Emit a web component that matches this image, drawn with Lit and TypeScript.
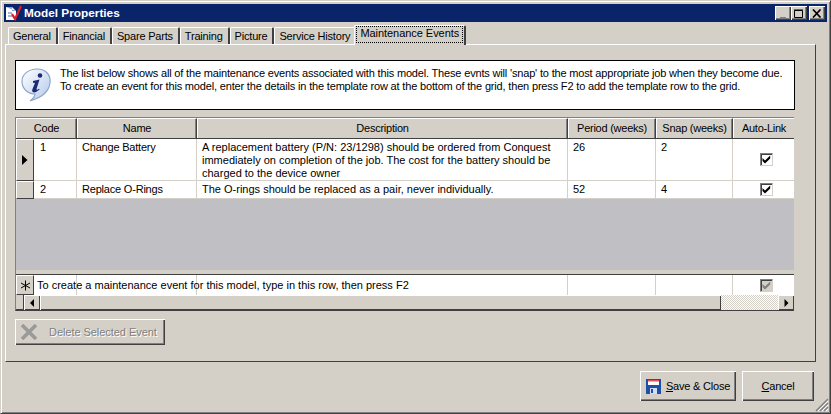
import { LitElement, html, css, svg } from "lit";
import { customElement } from "lit/decorators.js";

const checkMark = (color: string) => svg`<svg width="11" height="11" viewBox="0 0 11 11"><path d="M1.5 4 L4 6.5 L9.2 1.5 V4.4 L4 9.4 L1.5 6.9 Z" fill="${color}"/></svg>`;

const rows = [
  { code: "1", name: "Change Battery", lines: ["A replacement battery (P/N: 23/1298) should be ordered from Conquest", "immediately on completion of the job. The cost for the battery should be", "charged to the device owner"], period: "26", snap: "2", current: true },
  { code: "2", name: "Replace O-Rings", lines: ["The O-rings should be replaced as a pair, never individually."], period: "52", snap: "4", current: false },
];
const tabs = ["General", "Financial", "Spare Parts", "Training", "Picture", "Service History"];

@customElement("app-root")
export class AppRoot extends LitElement {
  static styles = css`
    :host { display: block; width: 831px; height: 414px; font: 11px/13px "Liberation Sans", Arial, sans-serif; color: #000; overflow: hidden; }
    * { box-sizing: border-box; }
    .window { position: relative; width: 831px; height: 414px; background: #d4d0c8; border: 1px solid; border-color: #d4d0c8 #404040 #404040 #d4d0c8; padding: 3px; box-shadow: inset 1px 1px 0 #fff, inset -1px -1px 0 #808080; display: flex; flex-direction: column; }
    .title { height: 18px; flex: none; background: #0a246a; color: #fff; display: flex; align-items: center; padding: 0 2px 0 1px; font: bold 11.8px "Liberation Sans", Arial, sans-serif; gap: 1px; }
    .title span { flex: 1; }
    .ctl { width: 16px; height: 14px; background: #d4d0c8; box-shadow: inset 1px 1px 0 #fff, inset -1px -1px 0 #404040, inset -2px -2px 0 #808080; display: flex; align-items: center; justify-content: center; margin-left: -1px; }
    .ctl.last { margin-left: 1px; }
    .tabs { display: flex; height: 22px; padding: 0 0 0 4px; flex: none; align-items: flex-end; }
    .tab { height: 17px; padding: 2px 5px 0 4px; background: #d4d0c8; border-left: 1px solid #fff; border-top: 1px solid #fff; border-right: 2px solid #404040; border-radius: 2px 2px 0 0; white-space: nowrap; letter-spacing: -0.2px; }
    .tab.active { height: 20px; margin: 0 0 -1px -3px; padding: 0 1px 0 1px; position: relative; z-index: 1; letter-spacing: -0.05px; }
    .focus { border: 1px dotted #000; padding: 0 3px; height: 17px; display: block; line-height: 13px; }
    .panel { flex: none; width: 811px; height: 318px; margin-left: 1px; background: #d4d0c8; border: 1px solid; border-color: #fff #404040 #404040 #fff; padding: 15px 20px 0 9px; display: flex; flex-direction: column; }
    .info { height: 50px; flex: none; background: #fff; border: 1px solid #000; display: flex; padding: 5px 0 0 4px; gap: 5px; }
    .info p { margin: 0; line-height: 13px; padding-top: 1px; white-space: nowrap; letter-spacing: -0.17px; }
    .grid { margin-top: 7px; height: 194px; flex: none; background: #d4d0c8; display: flex; flex-direction: column; }
    .gridin { width: 779px; height: 194px; background: #c0bfc4; border: 1px solid; border-color: #808080 transparent #404040 #808080; border-right: 0; display: flex; flex-direction: column; }
    .row { display: grid; grid-template-columns: 18px 43px 120px 371px 88px 77px 61px; flex: none; }
    .head { height: 21px; background: #d4d0c8; border-bottom: 1px solid #404040; }
    .hc { display: flex; align-items: center; justify-content: center; border-left: 1px solid #fff; border-top: 1px solid #fff; border-right: 1px solid #404040; box-shadow: inset -1px 0 0 #808080; height: 20px; letter-spacing: -0.25px; }
    .hc.first { grid-column: 1 / 3; }
    .hc.plain { border-right: 0; box-shadow: none; }
    .rh { background: #d4d0c8; border: 1px solid; border-color: #fff #404040 #404040 #fff; display: flex; align-items: center; justify-content: center; }
    .cell { background: #fff; border-right: 1px solid #d4d0c8; border-bottom: 1px solid #d4d0c8; padding: 2px 5px 0; line-height: 13px; white-space: nowrap; }
    .cell.code { padding-left: 6px; }
    .cell.short { letter-spacing: -0.2px; }
    .cell.chk { border-right: 0; display: flex; align-items: center; justify-content: center; padding: 0 0 0 5px; }
    .r1 { height: 42px; }
    .r2 { height: 18px; }
    .chkbox { width: 13px; height: 13px; background: #fff; border: 1px solid; border-color: #808080 #d4d0c8 #d4d0c8 #808080; box-shadow: inset 1px 1px 0 #404040; display: flex; align-items: center; justify-content: center; }
    .chkbox.off { background: #d4d0c8; }
    .spacer { flex: 1; background: #c0bfc4; }
    .sep { height: 5px; background: #d4d0c8; border-bottom: 1px solid #404040; flex: none; }
    .tpl { height: 20px; flex: none; background: #fff; position: relative; }
    .tpl .cell { height: 20px; border-bottom: 0; }
    .tpl .msg { position: absolute; left: 21px; top: 4px; background: transparent; white-space: nowrap; }
    .sb { height: 15px; flex: none; display: flex; background: #d4d0c8; }
    .sbbtn { width: 16px; height: 15px; background: #d4d0c8; box-shadow: inset 1px 1px 0 #fff, inset -1px -1px 0 #404040; display: flex; align-items: center; justify-content: center; flex: none; }
    .sb0 { width: 8px; background: #d4d0c8; border-right: 1px solid #404040; box-shadow: inset 0 -1px 0 #404040; flex: none; }
    .thumb { width: 681px; flex: none; background: #d4d0c8; box-shadow: inset 1px 1px 0 #fff, inset -1px -1px 0 #404040; }
    .track { flex: 1; background: repeating-conic-gradient(#fff 0 25%, #d4d0c8 0 50%) 0 0 / 2px 2px; }
    .del { margin-top: 8px; width: 150px; height: 26px; flex: none; background: #d4d0c8; box-shadow: inset 1px 1px 0 #fff, inset -1px -1px 0 #404040, inset -2px -2px 0 #808080; display: flex; align-items: center; padding: 0 0 0 5px; gap: 11px; color: #808080; text-shadow: 1px 1px 0 #fff; letter-spacing: -0.05px; }
    .foot { display: flex; justify-content: flex-end; gap: 6px; margin-top: 9px; padding-right: 13px; flex: none; }
    .btn { height: 30px; background: #d4d0c8; box-shadow: inset 1px 1px 0 #fff, inset -1px -1px 0 #404040, inset -2px -2px 0 #808080; display: flex; align-items: center; justify-content: center; gap: 5px; letter-spacing: -0.2px; }
    .save { width: 96px; }
    .cancel { width: 72px; }
    .grip { position: absolute; right: 1px; bottom: 1px; }
  `;

  render() {
    return html`<div class="window">
      <div class="title">
        <svg width="18" height="16" viewBox="0 0 18 16"><path d="M1 2 H7 L11 6 V15 H1 Z" fill="#fff"/><path d="M1 2 H7 V6 H11" fill="#7f9ed8"/><path d="M3 8 H7 M3 11 H8" stroke="#4a6fb8"/><path d="M7 9 L10 14 L16 1" fill="none" stroke="#d8202a" stroke-width="2.2"/></svg>
        <span>Model Properties</span>
        <div class="ctl"><svg width="10" height="9" viewBox="0 0 10 9"><path d="M2 8 H8 V9 H2 Z" fill="#808080"/></svg></div>
        <div class="ctl"><svg width="10" height="9" viewBox="0 0 10 9"><path d="M0.5 1.5 H8.5 V8.5 H0.5 Z" fill="none" stroke="#000"/><path d="M0 1 H9" stroke="#000"/></svg></div>
        <div class="ctl last"><svg width="10" height="9" viewBox="0 0 10 9"><path d="M1 0.5 L8.5 8.5 M8.5 0.5 L1 8.5" stroke="#000" stroke-width="1.7"/></svg></div>
      </div>
      <div class="tabs">
        ${tabs.map(t => html`<div class="tab">${t}</div>`)}
        <div class="tab active"><span class="focus">Maintenance Events</span></div>
      </div>
      <div class="panel">
        <div class="info">
          <svg width="35" height="38" viewBox="0 0 35 38" style="flex:none"><defs><linearGradient id="b" x1="0" y1="0" x2="1" y2="1"><stop offset="0" stop-color="#fff"/><stop offset="1" stop-color="#b4c8ea"/></linearGradient></defs><path d="M17 3 C26 3 31 9 30 17 C29 23 27 25 24 28 C21 31 16 33 10 35 C14 32 15 30 15 28 C8 28 2 23 2 15 C2 8 9 3 17 3 Z" fill="url(#b)" stroke="#8fa4cc" stroke-width="1.2"/><circle cx="20" cy="9.5" r="2.3" fill="#1b2a78"/><path d="M13 15 L19.5 13.5 L16.5 23 Q16.5 24.5 19 22.8 L19.6 23.6 Q15 27.5 12.7 26 Q11.6 25 12.5 23 L15 17 L13 16.8 Z" fill="#1b2a78"/></svg>
          <p>The list below shows all of the maintenance events associated with this model. These evnts will 'snap' to the most appropriate job when they become due.<br>To create an event for this model, enter the details in the template row at the bottom of the grid, then press F2 to add the template row to the grid.</p>
        </div>
        <div class="grid"><div class="gridin">
          <div class="row head">
            <div class="hc first">Code</div><div class="hc">Name</div><div class="hc">Description</div><div class="hc">Period (weeks)</div><div class="hc">Snap (weeks)</div><div class="hc plain">Auto-Link</div>
          </div>
          ${rows.map(r => html`<div class="row ${r.current ? "r1" : "r2"}">
            <div class="rh">${r.current ? html`<svg width="6" height="10" viewBox="0 0 6 10"><path d="M0 0 L5.5 5 L0 10 Z" fill="#000"/></svg>` : ""}</div>
            <div class="cell code">${r.code}</div><div class="cell short">${r.name}</div>
            <div class="cell">${r.lines.map((l, i) => html`${i ? html`<br>` : ""}${l}`)}</div>
            <div class="cell">${r.period}</div><div class="cell">${r.snap}</div>
            <div class="cell chk"><div class="chkbox">${checkMark("#000")}</div></div>
          </div>`)}
          <div class="spacer"></div>
          <div class="sep"></div>
          <div class="row tpl">
            <div class="rh"><svg width="11" height="11" viewBox="0 0 11 11"><path d="M5.5 0.5 V10.5 M1 3 L10 8 M10 3 L1 8" stroke="#000" stroke-width="1"/></svg></div>
            <div class="cell"></div><div class="cell"></div><div class="cell"></div><div class="cell"></div><div class="cell"></div>
            <div class="cell chk"><div class="chkbox off">${checkMark("#808080")}</div></div>
            <div class="msg">To create a maintenance event for this model, type in this row, then press F2</div>
          </div>
          <div class="sb">
            <div class="sb0"></div>
            <div class="sbbtn"><svg width="5" height="8" viewBox="0 0 5 8"><path d="M4 0 V8 L0 4 Z" fill="#000"/></svg></div>
            <div class="thumb"></div>
            <div class="track"></div>
            <div class="sbbtn"><svg width="5" height="8" viewBox="0 0 5 8"><path d="M0.5 0 V8 L4.5 4 Z" fill="#000"/></svg></div>
          </div>
        </div></div>
        <div class="del">
          <svg width="18" height="18" viewBox="0 0 18 18"><path d="M2 2 L16 16 M16 2 L2 16" stroke="#9a9a9a" stroke-width="3.6"/></svg>
          <span>Delete Selected Event</span>
        </div>
      </div>
      <div class="foot">
        <div class="btn save">
          <svg width="15" height="15" viewBox="0 0 15 15"><path d="M0 0 H15 V15 H0 Z" fill="#1f4fa8"/><path d="M2 1 H13 V6 H2 Z" fill="#fff"/><path d="M2 1 H13 V2.5 H2 Z" fill="#e05050"/><path d="M4 9 H11 V15 H4 Z" fill="#cfe0f5"/><path d="M5 10 H7 V14 H5 Z" fill="#1f4fa8"/></svg>
          <span><u>S</u>ave &amp; Close</span>
        </div>
        <div class="btn cancel"><span><u>C</u>ancel</span></div>
      </div>
      <svg class="grip" width="15" height="15" viewBox="0 0 15 15"><path d="M14 2 L2 14 M14 6 L6 14 M14 10 L10 14" stroke="#808080" stroke-width="1.5"/><path d="M14 4 L4 14 M14 8 L8 14 M14 12 L12 14" stroke="#fff"/></svg>
    </div>`;
  }
}
